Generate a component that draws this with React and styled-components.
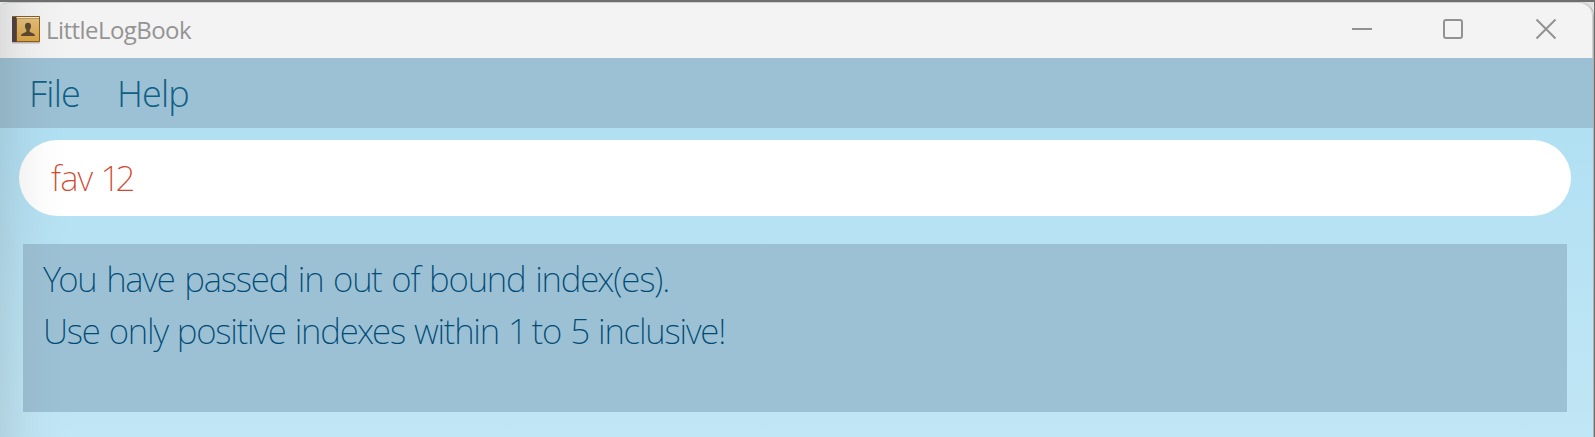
import React from "react";
import styled, { createGlobalStyle } from "styled-components";

const GlobalStyle = createGlobalStyle`
  * { box-sizing: border-box; }
  body { margin: 0; overflow: hidden; background: #6e6e6e; }
`;

const Desktop = styled.div`
  width: 1595px;
  height: 437px;
  border-top: 2px solid #6e6e6e;
  border-right: 1px solid #6e6e6e;
  background: #e2e2e2;
  font-family: "Open Sans", "Noto Sans", sans-serif;
`;

const Window = styled.div`
  position: relative;
  display: flex;
  flex-direction: column;
  height: 435px;
  overflow: hidden;
  border-right: 1px solid #b0b0b0;
  border-radius: 10px 14px 0 0 / 6px 14px 0 0;
  background: linear-gradient(#b1e0f3 126px, #c1e6f5 435px);
`;

const EdgeShade = styled.div`
  position: absolute;
  inset: 0 auto 0 0;
  width: 68px;
  pointer-events: none;
  background: linear-gradient(90deg, rgba(90, 90, 90, 0.14), rgba(90, 90, 90, 0.06) 35%, rgba(90, 90, 90, 0.02) 65%, rgba(90, 90, 90, 0));
`;

const TitleBar = styled.header`
  display: flex;
  align-items: center;
  flex: 0 0 56px;
  padding-left: 11px;
  background: #f3f3f3;
  border-radius: 10px 13px 0 0 / 6px 13px 0 0;
  box-shadow: inset -1px 1px 0 #d0d0d0;
  clip-path: inset(-2px -1px 0 0);
`;

const Title = styled.h1`
  flex: 1;
  margin: 0 0 0 5px;
  padding-bottom: 1px;
  font-size: 24px;
  font-weight: 400;
  letter-spacing: -0.55px;
  line-height: 32px;
  color: #949494;
`;

const Controls = styled.div`
  display: flex;
  align-items: center;
  margin: -2px 36px 0 0;
`;

const ControlIcon = styled.svg.attrs({ width: 22, height: 22, viewBox: "0 0 22 22" })`
  margin-left: ${(p) => p.$gap}px;
  fill: none;
  stroke: #929292;
  stroke-width: 2;
`;

const MenuBar = styled.nav`
  display: flex;
  flex: 0 0 70px;
  align-items: center;
  gap: 37px;
  padding: 2px 0 0 29px;
  background: #9cc1d4;
`;

const MenuItem = styled.span`
  font-size: 36px;
  font-weight: 300;
  line-height: 50px;
  letter-spacing: -0.8px;
  color: #0f5f86;
`;

const Content = styled.main`
  display: flex;
  flex-direction: column;
  gap: 28px;
  padding: 12px 22px 0 19px;
`;

const CommandBox = styled.div`
  height: 76px;
  padding: 13px 0 0 32px;
  border-radius: 38px;
  background: #fff;
  font: 200 35px/50px "Noto Sans", sans-serif;
  letter-spacing: -0.9px;
  color: #d0492e;
`;

const ResultBox = styled.section`
  height: 168px;
  margin: 0 4px;
  padding: 9px 0 0 20px;
  background: #9cc1d4;
`;

const ResultLine = styled.p`
  margin: 0;
  font: 200 35px/52px "Noto Sans", sans-serif;
  letter-spacing: ${(p) => p.$tracking}px;
  word-spacing: ${(p) => p.$wordGap}px;
  white-space: nowrap;
  color: #004a76;
`;

const NarrowDigit = styled.span`
  letter-spacing: -5px;
`;

const BookIcon = () => (
  <svg width="30" height="28" viewBox="0 0 30 28">
    <defs>
      <linearGradient id="cover" x1="0" y1="0" x2="0" y2="1">
        <stop offset="0" stopColor="#e3bd78" />
        <stop offset="1" stopColor="#dba345" />
      </linearGradient>
    </defs>
    <rect x="1" y="26" width="28" height="1.6" rx="0.8" fill="#bcbcbc" />
    <rect x="1" y="0" width="28" height="26" rx="0.8" fill="#8e5a10" />
    <rect x="4" y="1" width="24" height="1.4" fill="#f8f0dc" />
    <rect x="6" y="3" width="22" height="22" fill="url(#cover)" />
    <rect x="1" y="1" width="4.5" height="25" fill="#4b3c3d" />
    <path d="M17 6.800c-2.200 0-3.200 1.500-3 3.600.1 1.700.7 2.500 1.400 3.400v1.800c-.8 1.400-5 1.200-5.400 4.400h14c-.4-3.200-4.600-3-5.400-4.400v-1.800c.7-.9 1.300-1.700 1.400-3.400.2-2.100-.8-3.600-3-3.600z" fill="#59472c" />
  </svg>
);

export default function App() {
  return (
    <Desktop>
      <GlobalStyle />
      <Window>
        <TitleBar>
          <BookIcon />
          <Title>LittleLogBook</Title>
          <Controls>
            <ControlIcon $gap={0}>
              <path d="M1 11H21" />
            </ControlIcon>
            <ControlIcon $gap={69}>
              <rect x="2" y="2" width="18" height="18" rx="2" />
            </ControlIcon>
            <ControlIcon $gap={71}>
              <path d="M1.500 1.500L20.500 20.500M20.500 1.500L1.500 20.500" />
            </ControlIcon>
          </Controls>
        </TitleBar>
        <MenuBar>
          <MenuItem>File</MenuItem>
          <MenuItem>Help</MenuItem>
        </MenuBar>
        <Content>
          <CommandBox>
            fav <NarrowDigit>1</NarrowDigit>2
          </CommandBox>
          <ResultBox>
            <ResultLine $tracking={-1.2} $wordGap={1.8}>
              You have passed in out of bound index(es).
            </ResultLine>
            <ResultLine $tracking={-1.2} $wordGap={1.1}>
              Use only positive indexes within <NarrowDigit>1</NarrowDigit> to 5 inclusive!
            </ResultLine>
          </ResultBox>
        </Content>
        <EdgeShade />
      </Window>
    </Desktop>
  );
}
